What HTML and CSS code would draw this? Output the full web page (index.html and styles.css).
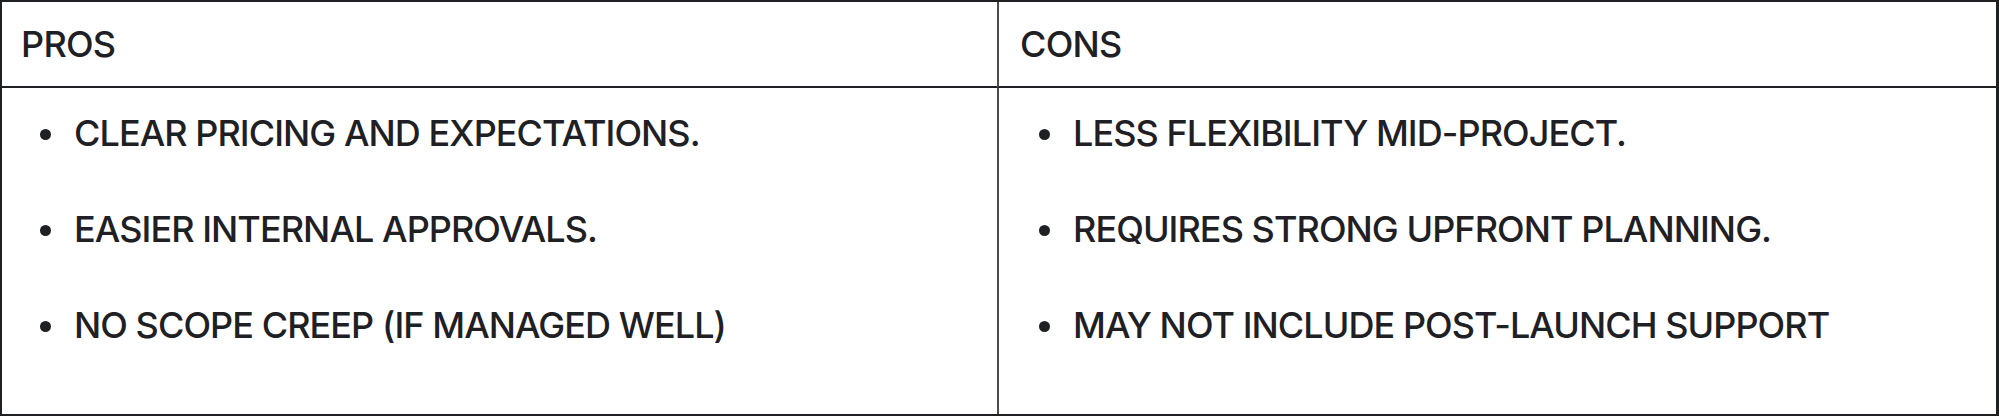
FILE: index.html
```html
<!DOCTYPE html>
<html>
<head>
<meta charset="utf-8">
<link rel="stylesheet" href="styles.css">
</head>
<body>
<div class="table">
  <div class="cell head">PROS</div>
  <div class="cell head right">CONS</div>
  <div class="cell body">
    <ul class="list">
      <li>CLEAR PRICING AND EXPECTATIONS.</li>
      <li>EASIER INTERNAL APPROVALS.</li>
      <li>NO SCOPE CREEP (IF MANAGED WELL)</li>
    </ul>
  </div>
  <div class="cell body right">
    <ul class="list">
      <li>LESS FLEXIBILITY MID-PROJECT.</li>
      <li>REQUIRES STRONG UPFRONT PLANNING.</li>
      <li>MAY NOT INCLUDE POST-LAUNCH SUPPORT</li>
    </ul>
  </div>
</div>
</body>
</html>
```
FILE: styles.css
```css
html, body {
  margin: 0;
  padding: 0;
  background: #ffffff;
}
body {
  font-family: "Inter", "Liberation Sans", sans-serif;
  color: #1f2024;
  width: 1999px;
  height: 416px;
  overflow: hidden;
}
.table {
  box-sizing: border-box;
  width: 1999px;
  height: 416px;
  border: 2px solid #1f2024;
  border-right-width: 3px;
  display: grid;
  grid-template-columns: 995px 1fr;
  grid-template-rows: 86px 1fr;
}
.cell {
  box-sizing: border-box;
}
.head {
  border-bottom: 2px solid #1f2024;
  font-size: 36px;
  font-weight: 450;
  line-height: 40px;
  letter-spacing: -0.02em;
  padding: 22px 20px 22px 19px;
}
.right {
  border-left: 2px solid #4c4c52;
}
.head.right {
  padding-left: 21px;
}
.list {
  list-style: none;
  margin: 0;
  padding: 18px 0 0 38px;
  display: flex;
  flex-direction: column;
  gap: 42px;
  font-size: 36px;
  font-weight: 550;
  line-height: 54px;
  letter-spacing: -0.026em;
}
.right .list {
  padding-left: 40px;
}
.list li {
  display: flex;
  align-items: center;
  gap: 23px;
}
.list li::before {
  content: "";
  flex: none;
  width: 11px;
  height: 11px;
  border-radius: 50%;
  background: #1f2024;
  margin-top: 2px;
}
```
